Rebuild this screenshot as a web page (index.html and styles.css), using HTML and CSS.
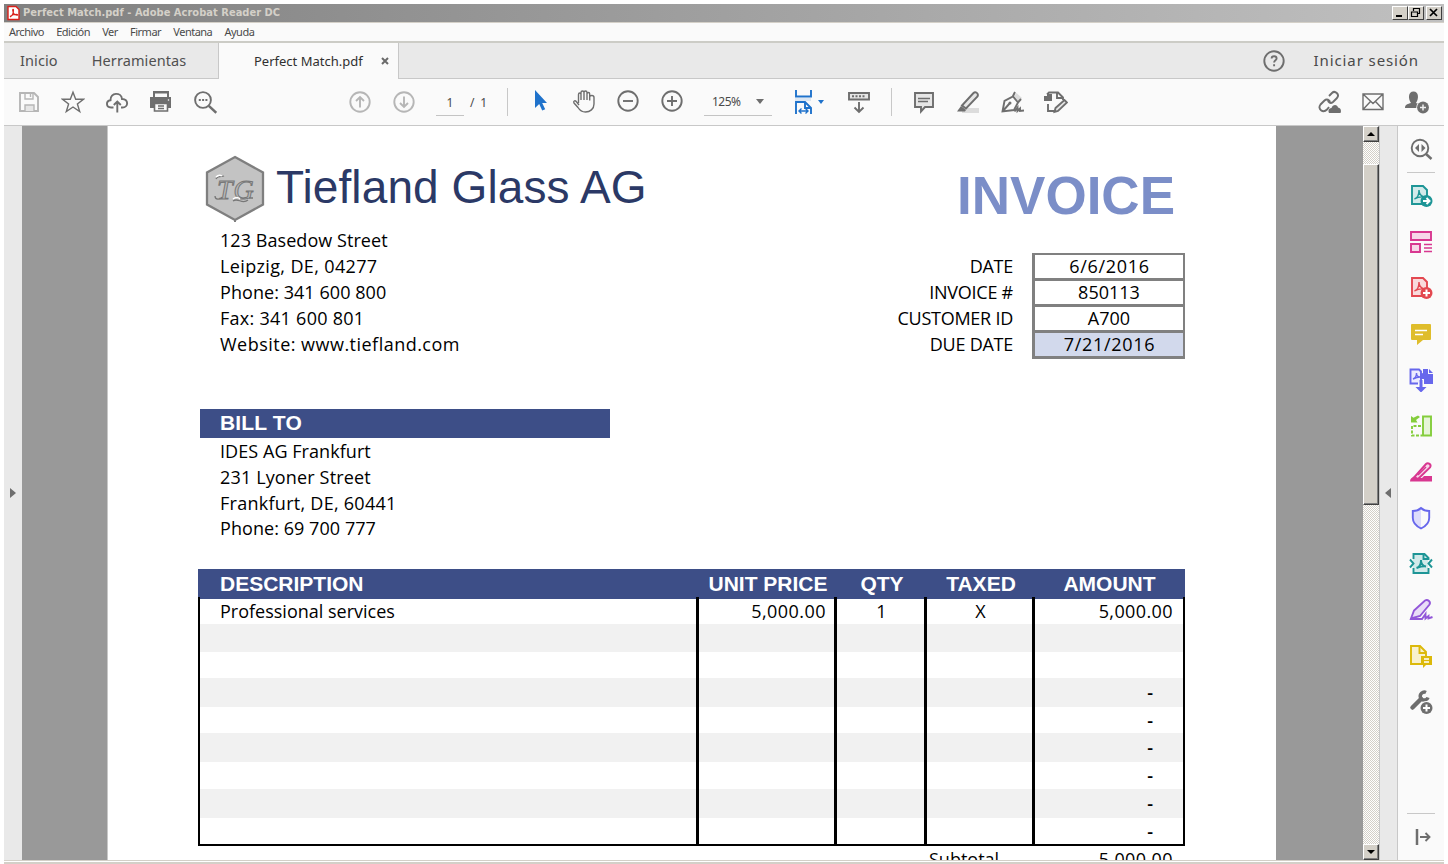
FILE: index.html
```html
<!DOCTYPE html>
<html lang="es">
<head>
<meta charset="utf-8">
<title>Perfect Match.pdf - Adobe Acrobat Reader DC</title>
<link rel="stylesheet" href="styles.css">
</head>
<body>
<div class="window">
  <header class="titlebar">
    <svg class="app-icon" viewBox="0 0 13 16"><path d="M1 1.500h8l3 3v10H1z" fill="#fff" stroke="#d9201a" stroke-width="1.400"/><path d="M3 12c2-1 3.500-4 3.500-7 0-1-1-1-.8.5C6 8 8 10 10 10.300c1 0 .8-1-.5-1C7 9.300 5 10 3 11.500" fill="none" stroke="#d9201a" stroke-width="1.100"/></svg>
    <span class="titlebar-text">Perfect Match.pdf - Adobe Acrobat Reader DC</span>
    <div class="win-buttons">
      <span class="win-btn"><svg viewBox="0 0 14 12"><path d="M3 9h6" stroke="#000" stroke-width="2"/></svg></span>
      <span class="win-btn"><svg viewBox="0 0 14 12"><path d="M4.500 4V1.500h6v5H9M4 1.500h7M2.500 5h6v4.500h-6zM2 5h7" fill="none" stroke="#000" stroke-width="1.200"/></svg></span>
      <span class="win-btn win-close"><svg viewBox="0 0 14 12"><path d="M3 2l7 7M10 2L3 9" stroke="#000" stroke-width="1.700"/></svg></span>
    </div>
  </header>
  <nav class="menubar"><span>Archivo</span><span>Edición</span><span>Ver</span><span>Firmar</span><span>Ventana</span><span>Ayuda</span></nav>
  <div class="tabs">
    <div class="tabs-left"><span>Inicio</span><span>Herramientas</span></div>
    <div class="tab-active"><span>Perfect Match.pdf</span><svg viewBox="0 0 8 8"><path d="M1 1l6 6M7 1L1 7" stroke="#6a6a6a" stroke-width="2"/></svg></div>
    <div class="tabs-right">
      <svg class="icon" viewBox="0 0 24 24"><circle cx="12" cy="12" r="9.700" class="ln"/><path d="M9.600 9.500c0-3 5-3 5 0 0 1.800-2.500 1.800-2.500 4M12.100 15.200v2" class="ln"/></svg>
      <span>Iniciar sesión</span>
    </div>
  </div>
  <div class="toolbar">
    <div class="group">
      <svg class="icon pale" viewBox="0 0 24 24"><path class="ln" d="M3 3h14l4 4v14H3z"/><path class="ln thin" d="M8 3v6h8V3M13.500 3v4"/><path d="M8 21v-6h9v6" class="ln thin lightfill"/></svg>
      <svg class="icon" viewBox="0 0 24 24"><path class="ln thin" d="M12 2.300l2.700 7h7.700l-6 4.700 2.300 7.500-6.700-4.500-6.700 4.500 2.300-7.500-6-4.700h7.700z"/></svg>
      <svg class="icon" viewBox="0 0 24 24"><path class="ln" d="M8.500 17.500H6C.8 17.500.6 10.800 5.500 10.200 5 2 16.500 2 17 9c7-.2 6.500 8.500.5 8.500H16M12.300 22.500V12M8.800 15l3.500-3.500 3.500 3.500"/></svg>
      <svg class="icon" viewBox="0 0 24 24"><path d="M4 1h16v6h2v11H1V7h3z" class="solid"/><path d="M6 3.500h12V7H6z" fill="#fafafa"/><path d="M5.500 13.500h13v7.500h-13z" fill="#fafafa" class="edge"/><path d="M9 16h6M9 18.500h6" class="ln thin"/><circle cx="19.500" cy="10" r=".8" fill="#fafafa"/></svg>
      <svg class="icon" viewBox="0 0 24 24"><circle cx="10" cy="10" r="7.900" class="ln" /><path d="M15.800 15.800l7.500 7" class="ln fat"/><path d="M5.800 10h8.700" class="ln" stroke-dasharray="2 1.300"/></svg>
    </div>
    <div class="group nav-group pale">
      <svg class="icon" viewBox="0 0 24 24"><circle cx="12" cy="12" r="9.700" class="ln"/><path class="ln" d="M12 17.500V7M8 11l4-4 4 4"/></svg>
      <svg class="icon" viewBox="0 0 24 24"><circle cx="12" cy="12" r="9.700" class="ln"/><path class="ln" d="M12 6.500V17M8 13l4 4 4-4"/></svg>
    </div>
    <div class="page-box">1</div><div class="page-total">/ 1</div>
    <i class="divider"></i>
    <div class="group view-group">
      <svg class="icon" viewBox="0 0 24 24"><path d="M7 1v18l4.200-4 3 6.500 3-1.300-3-6.200H19z" fill="#1f72cb"/></svg>
      <svg class="icon" viewBox="0 0 24 24"><path class="ln thin" d="M6.500 14V5.500c0-2 2.500-2 2.500 0V11 3.500c0-2 3-2 3 0V11 3.500c0-2 3-2 3 0V11 5c0-2 2.700-2 2.700 0v6.500V8c0-2 4.300-2 4.300.5V15c0 5-4 8-8.500 8-4.500 0-6-2-7.500-4.500L2 14c-1-1.800.8-3 2.300-1.400L7 16"/></svg>
      <svg class="icon" viewBox="0 0 24 24"><circle cx="12" cy="12" r="9.700" class="ln"/><path class="ln" d="M7 12h10"/></svg>
      <svg class="icon" viewBox="0 0 24 24"><circle cx="12" cy="12" r="9.700" class="ln"/><path class="ln" d="M7 12h10M12 7v10"/></svg>
      <div class="zoom-box"><span>125%</span><i class="caret"></i></div>
    </div>
    <div class="fit"><svg class="icon blue" viewBox="0 0 24 24"><path d="M4 8h16v3H4z" fill="#dbe6f2"/><path class="ln" d="M5 0v6.500h15V0M5 24V12h9l6 6v6"/><path class="ln" d="M14 12v6h6"/><path class="ln thin" d="M8 21h9M10.500 18.500L8 21l2.500 2.500M14.500 18.500L17 21l-2.500 2.500"/></svg><i class="caret caret-blue"></i></div>
    <svg class="icon scroll-icon" viewBox="0 0 24 24"><path class="ln lightfill" d="M2 3h20v6.500H2z"/><path class="ln" d="M5 6.300h14" stroke-dasharray="2 1.500"/><path class="ln" d="M12 12v10M7.500 17.500L12 22l4.500-4.500"/></svg>
    <i class="divider divider-2"></i>
    <div class="group edit-group">
      <svg class="icon" viewBox="0 0 24 24"><path class="ln lightfill" d="M3 3h18v14h-8l-4 4.500V17H3z"/><path class="ln thin" d="M6 8.500h12M6 11.500h10"/></svg>
      <svg class="icon" viewBox="0 0 24 24"><path d="M6 18h17v5H6z" fill="#dcdcdc"/><path class="ln lightfill" d="M6 15.500L17.500 3c2-2 5.500.5 4 3.500L10 18.500z"/><path class="solid" d="M5 16l5 4-1 1.500H1z"/></svg>
      <svg class="icon" viewBox="0 0 24 24"><path d="M14 6l2.500-3L22 8l-3 4z" fill="#dcdcdc"/><path class="ln" d="M2.500 21.500L4.500 11 13 6.500l5 6-4 7.500zM2.500 21.500l7-8M12.500 7l2.500-5M17.500 13l3.500-4"/><path class="ln" d="M14.500 21.500l3-4v3.500l2.500-2.500v2.500l4-.5"/><circle cx="10" cy="13" r="1.500" class="solid"/></svg>
      <svg class="icon" viewBox="0 0 24 24"><path class="solid" d="M0 6h3V4h5v7H0z"/><path class="ln" d="M3 4.500l2-2h9l5 5V10M13 3v5h6M4 14v7h6"/><path class="ln lightfill" d="M11.500 18l9-8 2.500 2.500-9 8.500-3.500 1z"/></svg>
    </div>
    <div class="group share-group">
      <svg class="icon" viewBox="0 0 24 24"><path class="ln" d="M12 6l3-3c3-3 8 1.500 5 5l-4 4c-2.500 2-5 .5-5-2M12 17l-2 2.500c-4 4-10-.5-6.500-5l4-4c2-2 5.500-1 5.500 2"/><path class="solid" d="M12 23c-1.500-3 .5-5 2.500-5 1-4 6-4 6.500-.5 3 .5 3.500 3.500 2.500 5.500z"/></svg>
      <svg class="icon" viewBox="0 0 24 24"><path class="ln thin" d="M2 4h20v15.500H2zM2 4l10 9.500L22 4M2 19.500L9.500 11.500M22 19.500L14.500 11.500"/></svg>
      <svg class="icon" viewBox="0 0 24 24"><path class="solid" d="M0 18c0-4 3-4 6-5C3 9 3 1.500 8.500 1.500S14 9 11 13l4 1.500V18z"/><circle cx="18" cy="17.500" r="6.700" fill="#fafafa"/><circle cx="18" cy="17.500" r="5.900" class="solid"/><path d="M15 17.500h6M18 14.500v6" stroke="#eee" stroke-width="1.500"/></svg>
    </div>
  </div>
  <main class="workspace">
    <aside class="left-strip"><i class="tri tri-right"></i></aside>
    <section class="canvas">
      <article class="page">
        <div class="letterhead">
          <svg class="logo" viewBox="0 0 60 68"><path d="M30 2L58 17.500v32L30 65 2 49.500v-32z" fill="#c3c3c3" stroke="#7f7f7f" stroke-width="2.300"/><path d="M30 64v3" stroke="#7f7f7f" stroke-width="2"/><text x="12" y="44" class="monogram">TG</text><path d="M11 24c2-4 6-2 8-3M10 41c0 4 5 4 7 1M28 46c5-4 9 4 15-1M44 43h4" fill="none" stroke="#777" stroke-width="1.300"/><path d="M11 22q3-3 6-1M28 44q4-3 7 0" fill="none" stroke="#fff" stroke-width="1.500"/></svg>
          <h1 class="company">Tiefland Glass AG</h1>
          <h2 class="invoice-title">INVOICE</h2>
        </div>
        <div class="info">
          <address class="lines">
            <p>123 Basedow Street</p><p class="t3">Leipzig, DE, 04277</p><p>Phone: 341 600 800</p><p class="t2">Fax: 341 600 801</p><p class="t4">Website: www.tiefland.com</p>
          </address>
          <div class="meta">
            <div class="meta-labels"><p>DATE</p><p>INVOICE #</p><p>CUSTOMER ID</p><p>DUE DATE</p></div>
            <div class="meta-values"><p class="wide">6/6/2016</p><p>850113</p><p>A700</p><p class="due wide">7/21/2016</p></div>
          </div>
        </div>
        <h3 class="billto">BILL TO</h3>
        <address class="lines bill-lines">
          <p>IDES AG Frankfurt</p><p class="t1">231 Lyoner Street</p><p class="t2">Frankfurt, DE, 60441</p><p>Phone: 69 700 777</p>
        </address>
        <div class="items">
          <div class="row head"><span>DESCRIPTION</span><span>UNIT PRICE</span><span>QTY</span><span>TAXED</span><span>AMOUNT</span></div>
          <div class="body">
            <div class="row first"><span>Professional services</span><span>5,000.00</span><span>1</span><span>X</span><span>5,000.00</span></div>
            <div class="row g r28"><span></span><span></span><span></span><span></span><span></span></div>
            <div class="row r26"><span></span><span></span><span></span><span></span><span></span></div>
            <div class="row g r29"><span></span><span></span><span></span><span></span><span class="dash">-</span></div>
            <div class="row r26"><span></span><span></span><span></span><span></span><span class="dash">-</span></div>
            <div class="row g r29"><span></span><span></span><span></span><span></span><span class="dash">-</span></div>
            <div class="row r27"><span></span><span></span><span></span><span></span><span class="dash">-</span></div>
            <div class="row g r29"><span></span><span></span><span></span><span></span><span class="dash">-</span></div>
            <div class="row r26"><span></span><span></span><span></span><span></span><span class="dash">-</span></div>
          </div>
          <div class="subtotal"><span>Subtotal</span><span class="t4">5,000.00</span></div>
        </div>
      </article>
    </section>
    <div class="scrollbar">
      <span class="sb-btn"><i class="sb-up"></i></span>
      <span class="sb-gap"></span>
      <span class="sb-thumb"></span>
      <span class="sb-rest"></span>
      <span class="sb-btn"><i class="sb-down"></i></span>
    </div>
    <aside class="right-strip"><i class="tri tri-left"></i></aside>
    <aside class="tools">
      <svg class="icon" viewBox="0 0 24 24"><circle cx="11" cy="11" r="8.300" class="ln"/><path d="M17 17l5.500 5" class="ln fat"/><path class="solid" d="M10 7v8l-4-4zM12.500 7v8l4-4z"/></svg>
      <i class="tools-rule"></i>
      <div class="tool-list">
        <svg class="icon teal" viewBox="0 0 24 24"><path class="ln tint" d="M3 2h11l4 4v14H3z"/><path class="ln thin" d="M5.500 15c3-1 4.500-5 4.500-9 0 4 2 6 5 7-4-.500-7 .5-9.500 2"/><circle cx="17.500" cy="17" r="6" class="solid"/><path d="M14 17h6M17.500 14l3 3-3 3" fill="none" stroke="#fff" stroke-width="2"/></svg>
        <svg class="icon pink" viewBox="0 0 24 24"><path class="ln tint" d="M2 2h20v8H2zM2 14h9v8H2z"/><path class="ln thin" d="M15 14.500h8M15 18h8M15 21.500h8"/></svg>
        <svg class="icon red" viewBox="0 0 24 24"><path class="ln tint" d="M3 2h11l4 4v14H3z"/><path class="ln thin" d="M5.500 15c3-1 4.500-5 4.500-9 0 4 2 6 5 7-4-.500-7 .5-9.500 2"/><circle cx="17.500" cy="17" r="6" class="solid"/><path d="M14 17h7M17.500 13.500v7" stroke="#fff" stroke-width="2"/></svg>
        <svg class="icon" viewBox="0 0 24 24"><path d="M2 3q0-1 1-1h18q1 0 1 1v14q0 1-1 1h-7l-6 5v-5H3q-1 0-1-1z" fill="#dfbd2b"/><path d="M6 8.500h12M6 12.500h8" stroke="#fff" stroke-width="1.500"/></svg>
        <svg class="icon indigo" viewBox="0 0 24 24"><path class="ln paper" d="M9 15.500H1.500v-14H10l2 2v9"/><path class="ln thin" d="M4 11c3-1 3.500-4 3.500-6 0 2 1.500 4 3.500 4-3 0-5 1-7 2"/><path class="solid" d="M14 1h5v5h5v10h-9v-5h-4V6l3-1zM20 1l4 4h-4z"/><path class="solid" d="M10.500 12h3v7h4L12 24.500 6.500 19h4z"/></svg>
        <svg class="icon green" viewBox="0 0 24 24"><path class="ln tint" d="M14 2.500h8v19h-8z"/><path class="ln" stroke-dasharray="3 1.500" d="M12 12H3v9.500h10"/><path class="solid" d="M2 2l2.500 1.800L9 1.500 11 3l-4 3 1.500 2.500H2z"/></svg>
        <svg class="icon pink" viewBox="0 0 24 24"><path class="solid" d="M1 21.500c0-3 2-4 4-5l5 1.500h3l2-2h8v5.500z"/><path class="ln tint" d="M5.500 17L17 4c2-2 6 .5 4 3.500L9 19z"/><path class="ln thin" d="M9 15l8-8"/></svg>
        <svg class="icon indigo" viewBox="0 0 24 24"><path d="M12 2v20c-5-2-8-6-8-10V5c3 0 6-1 8-3z" fill="#dddcfb"/><path class="ln" d="M12 2c2 2 5 3 8.200 3v7c0 4-3 8-8.200 10.500C7 20 3.800 16 3.800 12V5c3.200 0 6.200-1 8.200-3z"/></svg>
        <svg class="icon teal" viewBox="0 0 24 24"><path d="M4 2h11l4 4v15H4z" fill="#d2eaea"/><path class="ln" d="M4.500 7V2h11l4 4v2M4.500 16v5h15v-5M14.500 2v5h5"/><path class="ln" d="M1 7.500l3.500 4L1 15.500M23 7.500l-3.500 4 3.500 4"/><path class="ln" d="M7.500 16c3-1 4.500-4 4.500-8 0 4 2 6 5 6.500-4-.500-6.500.5-9.500 1.500"/></svg>
        <svg class="icon purple" viewBox="0 0 24 24"><path class="ln tint" d="M2 20.500l3-8 11-10c3-1.500 6 1.500 4.500 4L11 18z"/><path class="ln" d="M1 21h12l3.500-5v4.500l3-2.500v2.500l4-1.500"/></svg>
        <svg class="icon yellow" viewBox="0 0 24 24"><path class="ln tint" d="M2 2h9l6 6v12H2z"/><path class="ln" d="M10.500 2v7H17"/><path class="solid" d="M12 12h11v9h-6l-3 3v-3h-2z"/><path d="M15 15h5M15 18h5" stroke="#fff" stroke-width="1.300"/></svg>
        <svg class="icon" viewBox="0 0 24 24"><path d="M3.500 17.500L12 9" stroke="#6e6e6e" stroke-width="4.500" stroke-linecap="round"/><path d="M17 2.500a4 4 0 1 0 2 5" fill="none" stroke="#6e6e6e" stroke-width="3.500"/><circle cx="17.500" cy="18" r="7" fill="#fafafa"/><circle cx="17.500" cy="18" r="6" class="solid"/><path d="M14 18h7M17.500 14.500v7" stroke="#fff" stroke-width="2"/></svg>
      </div>
      <div class="tools-bottom"><svg class="icon" viewBox="0 0 24 24"><path class="ln fat" d="M7 4v16"/><path class="ln" d="M10 12h9M15.500 8l4 4-4 4"/></svg></div>
    </aside>
  </main>
  <footer class="bottom-edge"></footer>
</div>
</body>
</html>
```

FILE: styles.css
```css
* { box-sizing: border-box; }
body { margin: 0; background: #fff; overflow: hidden; font-family: "Noto Sans", sans-serif; color: #4a4a4a; }
h1, h2, h3, p { margin: 0; }
address { font-style: normal; }
i { display: block; }
svg { display: block; flex: none; }
.window { width: 1440px; height: 864px; margin-left: 4px; padding-top: 4px; display: flex; flex-direction: column; }

.icon { width: 24px; height: 24px; color: #6e6e6e; }
.ln { fill: none; stroke: currentColor; stroke-width: 1.9; }
.thin { stroke-width: 1.4; }
.fat { stroke-width: 2.5; }
.solid { fill: currentColor; }
.edge { stroke: currentColor; stroke-width: 1.6; }
.tint { fill: color-mix(in srgb, currentColor 20%, white); }
.lightfill { fill: #e6e6e6; }
.paper { fill: #ecebff; }
.pale, .pale .icon { color: #b6b6b6; }
.blue { color: #1f72cb; }
.teal { color: #1d9596; }
.pink { color: #d83790; }
.red { color: #e34850; }
.indigo { color: #6767ec; }
.green { color: #84cd3c; }
.purple { color: #9256d9; }
.yellow { color: #dcb90a; }

.titlebar { height: 19px; flex: none; display: flex; align-items: center; background: linear-gradient(90deg, #808080, #c0c0c0); border-bottom: 1px solid #d4d0c8; color: #d4d0c8; }
.app-icon { width: 13px; height: 16px; margin-left: 3px; }
.titlebar-text { margin-left: 3px; font: bold 11px/18px "DejaVu Sans Condensed", "DejaVu Sans", sans-serif; letter-spacing: 0.03px; white-space: nowrap; }
.win-buttons { display: flex; margin-left: auto; margin-right: 2px; }
.win-btn { width: 16px; height: 14px; background: #d4d0c8; border: 1px solid; border-color: #fff #404040 #404040 #fff; }
.win-btn svg { width: 14px; height: 12px; }
.win-close { margin-left: 2px; }

.menubar { height: 20px; flex: none; display: flex; gap: 12.200px; padding-left: 5px; background: #fafafa; border-bottom: 2px solid #ccccc6; font-size: 11px; line-height: 18px; letter-spacing: -0.5px; }

.tabs { height: 36px; flex: none; display: flex; background: #e9e9e9; font-size: 14.500px; line-height: 35px; }
.tabs-left { width: 215px; display: flex; gap: 34px; padding-left: 16px; border-right: 1px solid #c8c8c8; border-bottom: 1px solid #c8c8c8; letter-spacing: 0.1px; color: #505050; }
.tab-active { width: 180px; display: flex; align-items: center; gap: 18px; padding-left: 35px; background: #fafafa; border-right: 1px solid #c8c8c8; font-size: 13px; color: #303030; }
.tab-active svg { width: 8px; height: 8px; }
.tabs-right { flex: 1; display: flex; align-items: center; justify-content: flex-end; gap: 28px; padding-right: 25px; border-bottom: 1px solid #c8c8c8; font-size: 15px; letter-spacing: 0.9px; }

.toolbar { height: 47px; flex: none; display: flex; align-items: center; padding-left: 13px; background: #fafafa; border-bottom: 1px solid #c8c8c8; font: 12px/22px "Noto Sans", sans-serif; }
.group { display: flex; gap: 20px; }
.nav-group { margin-left: 131px; }
.page-box { width: 28px; height: 27px; margin-left: 20px; border-bottom: 1px solid #c4c4c4; text-align: center; line-height: 27px; }
.page-total { width: 18px; margin-left: 6px; white-space: nowrap; letter-spacing: 1.3px; line-height: 27px; }
.divider { width: 1px; height: 28px; margin-left: 19px; background: #c8c8c8; }
.view-group { margin-left: 20px; }
.zoom-box { width: 68px; height: 27px; display: flex; align-items: center; justify-content: space-between; padding: 0 8px; border-bottom: 1px solid #c4c4c4; letter-spacing: -0.5px; }
.caret { border: 4px solid transparent; border-top: 5px solid #6e6e6e; border-bottom: 0; }
.caret-blue { border-top-color: #1f72cb; border-width: 4px 3.500px 0; }
.fit { display: flex; align-items: center; gap: 3px; margin-left: 19px; }
.scroll-icon { margin-left: 23px; }
.divider-2 { margin-left: 20px; }
.edit-group { margin-left: 20px; }
.share-group { margin-left: auto; margin-right: 15px; }

.workspace { flex: 1; min-height: 0; display: flex; }
.left-strip { width: 18px; display: flex; align-items: center; padding-left: 6px; background: #e9e9e9; }
.tri { border: 5.500px solid transparent; }
.tri-right { border-left: 6px solid #6e6e6e; border-right: 0; }
.tri-left { border-right: 6px solid #6e6e6e; border-left: 0; }
.canvas { width: 1341px; padding: 0 87px 0 85px; background: #999; overflow: hidden; }
.page { height: 734px; padding-left: 90px; background: #fff; border-left: 1px solid #c8c8c8; overflow: hidden; font: 18px/26px "Open Sans", "Noto Sans", sans-serif; color: #000; }
.letterhead { height: 101px; display: flex; padding-left: 7px; font-family: "Liberation Sans", Arial, sans-serif; }
.logo { width: 60px; height: 68px; margin-top: 28.500px; }
.monogram { font: italic 28px "Liberation Serif", serif; letter-spacing: 1px; fill: #b9b9b9; stroke: #777; stroke-width: 1; }
.company { margin: 35px 0 0 11px; font-size: 46px; line-height: 53px; font-weight: 400; letter-spacing: 0.1px; color: #2b3966; white-space: nowrap; }
.invoice-title { margin: 39px 101px 0 auto; font-size: 53px; line-height: 61px; color: #7b8ec8; }
.info { height: 182px; display: flex; justify-content: space-between; padding: 0 91px 0 22px; }
.lines { letter-spacing: 0.06px; }
.lines .t1 { letter-spacing: 0.15px; }
.lines .t2 { letter-spacing: 0.27px; }
.lines .t3 { letter-spacing: 0.36px; }
.lines .t4 { letter-spacing: 0.48px; }
.meta { display: flex; gap: 19px; margin-top: 26px; }
.meta-labels { text-align: right; letter-spacing: -0.25px; }
.meta-values { width: 153px; height: 106px; border: solid #808080; border-width: 2px 2px 3px 3px; text-align: center; }
.meta-values p { height: 26px; line-height: 23px; border-bottom: 3px solid #808080; }
.meta-values .wide { padding-left: 1px; letter-spacing: 0.7px; }
.meta-values .due { height: 23px; border: 0; background: #d2d9ec; }
.billto { width: 410px; height: 29px; margin-left: 2px; padding-left: 20px; background: #3d4e87; color: #fff; font: bold 21px/28px "Liberation Sans", Arial, sans-serif; letter-spacing: 0.15px; }
.bill-lines { height: 131px; padding-left: 22px; }
.bill-lines p:last-child { line-height: 24px; }
.items { width: 987px; }
.row { display: grid; grid-template-columns: 499px 138px 90px 108px 149px; }
.head { height: 30px; padding: 0 2px; background: #3d4e87; color: #fff; text-align: center; font: bold 21px/30px "Liberation Sans", Arial, sans-serif; }
.head span:first-child { text-align: left; padding-left: 20px; }
.body { height: 249px; margin-top: -2px; border: solid #000; border-width: 0 2px 2px; }
.body .row { grid-template-columns: 499px 138px 90px 108px 148px; }
.body .row span { border-right: 3px solid #000; }
.body .row span:last-child { border-right: 0; padding-right: 10px; text-align: right; }
.first { height: 27px; line-height: 28px; text-align: center; background: linear-gradient(#3d4e87 2px, #fff 2px); }
.first span:first-child { text-align: left; padding-left: 20px; }
.first span:nth-child(2) { text-align: right; padding-right: 8px; letter-spacing: 0.45px; }
.first span:nth-child(3), .first span:nth-child(4) { padding-left: 2px; }
.first span:last-child { letter-spacing: 0.4px; }
.g { background: #f1f1f1; }
.r26 { height: 26px; line-height: 26px; }
.r27 { height: 27px; line-height: 26px; }
.r28 { height: 28px; }
.r29 { height: 29px; line-height: 29px; }
.body .row span.dash { padding-right: 30px; font-weight: 600; }
.subtotal { display: flex; justify-content: space-between; padding: 0 12px 0 731px; }
.subtotal .t4 { letter-spacing: 0.4px; }

.scrollbar { width: 17px; display: flex; flex-direction: column; border-right: 1px solid #c8c8c8; background: repeating-conic-gradient(#d4d0c8 0 25%, #fff 0 50%) 0 0 / 2px 2px; }
.sb-btn { height: 16px; display: flex; align-items: center; justify-content: center; background: #d4d0c8; border: 1px solid; border-color: #fff #404040 #404040 #fff; box-shadow: inset -1px -1px #808080; }
.sb-gap { height: 22px; }
.sb-thumb { height: 341px; background: #d4d0c8; border: 1px solid; border-color: #fff #404040 #404040 #fff; box-shadow: inset -1px -1px #808080; }
.sb-rest { flex: 1; }
.sb-up { border: 4px solid transparent; border-bottom-color: #000; border-top: 0; }
.sb-down { border: 4px solid transparent; border-top-color: #000; border-bottom: 0; }
.right-strip { width: 18px; display: flex; align-items: center; padding-left: 5px; background: #e9e9e9; border-right: 1px solid #c8c8c8; }
.tools { width: 46px; display: flex; flex-direction: column; align-items: center; padding-top: 11px; background: #fafafa; }
.tools-rule { width: 28px; height: 1px; margin: 11px 0; background: #c8c8c8; }
.tool-list { display: flex; flex-direction: column; gap: 22px; }
.tools-bottom { width: 28px; height: 47px; margin-top: auto; padding: 11px 0 0 3px; border-top: 1px solid #c8c8c8; }
.bottom-edge { height: 4px; flex: none; border-top: 1px solid #d4d0c8; border-bottom: 2px solid #d4d0c8; background: #fff; }
```
